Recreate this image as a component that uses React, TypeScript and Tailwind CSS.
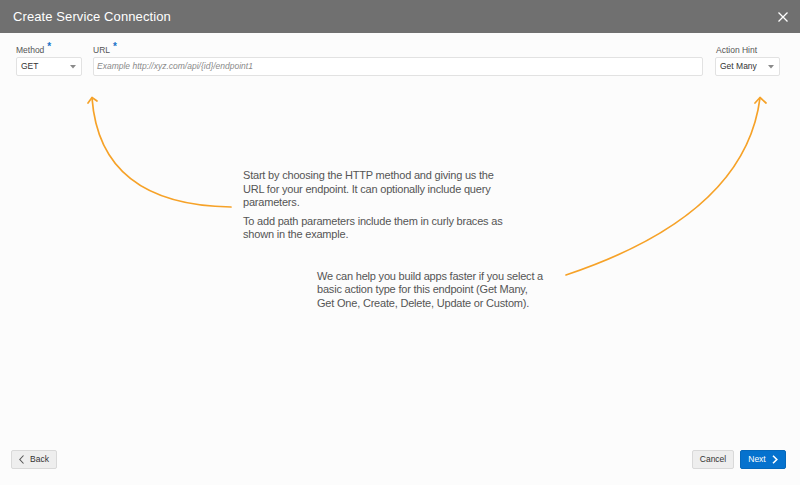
import React from 'react';

// Small dropdown caret used inside the select boxes
const Caret = () => (
  <svg width="6" height="4" viewBox="0 0 6 4" className="shrink-0">
    <path d="M0 0 L6 0 L3 3.5 Z" fill="#8a8a8a" />
  </svg>
);

const Required = () => <span className="ml-[3px] text-[#1a73c8] text-[10px] font-bold relative -top-[3px]">*</span>;

const FieldLabel = ({ text, required }: { text: string; required?: boolean }) => (
  <div className="h-[12px] text-[8.5px] leading-[12px] text-[#555] mb-[1px] whitespace-nowrap">
    {text}
    {required && <Required />}
  </div>
);

const SelectBox = ({ value, width }: { value: string; width: string }) => (
  <div
    className={`${width} h-[19px] flex items-center justify-between pl-[4px] pr-[5px] bg-white border border-[#e2e2e2] rounded-[2px] text-[8.5px] text-[#333]`}
  >
    <span>{value}</span>
    <Caret />
  </div>
);

// Orange hint arrows drawn over the page
const HintArrows = () => (
  <svg className="absolute inset-0 pointer-events-none" width="800" height="485" viewBox="0 0 800 485">
    <g fill="none" stroke="#f6a228" strokeWidth="1.7" strokeLinecap="round" strokeLinejoin="round">
      <path d="M231 207 Q100 205 92 98" />
      <path d="M88 103 L92 97.5 L97 101" />
      <path d="M566 275 Q745 215 760 98" />
      <path d="M755 103 L760 97.5 L766 103" />
    </g>
  </svg>
);

export default function App() {
  return (
    <div
      className="relative w-[800px] h-[485px] flex flex-col bg-[#fcfcfc] overflow-hidden"
      style={{ fontFamily: '"Liberation Sans", Arial, sans-serif' }}
    >
      <header className="h-[33px] shrink-0 bg-[#707070] flex items-center justify-between pl-[13px] pr-[12px]">
        <h1 className="text-[13px] text-white font-normal tracking-[0.1px]">Create Service Connection</h1>
        <svg width="10" height="10" viewBox="0 0 10 10" className="mt-[1px]">
          <path d="M0.5 0.5 L9.5 9.5 M9.5 0.5 L0.5 9.5" stroke="#fff" strokeWidth="1.3" />
        </svg>
      </header>

      <main className="flex-1 flex flex-col">
        <div className="flex items-start pt-[11px] pl-[16px] pr-[20px]">
          <div className="w-[66px]">
            <FieldLabel text="Method" required />
            <SelectBox value="GET" width="w-[66px]" />
          </div>
          <div className="flex-1 ml-[11px]">
            <FieldLabel text="URL" required />
            <div className="h-[19px] flex items-center pl-[3px] bg-white border border-[#e2e2e2] rounded-[2px] text-[8.5px] italic text-[#8a8a8a]">
              Example http://xyz.com/api/{'{id}'}/endpoint1
            </div>
          </div>
          <div className="w-[65px] ml-[12px]">
            <div className="pl-[1px]">
              <FieldLabel text="Action Hint" />
            </div>
            <SelectBox value="Get Many" width="w-[65px]" />
          </div>
        </div>

        <div className="ml-[243px] mt-[93px] text-[11px] tracking-[-0.2px] leading-[13.5px] text-[#555] whitespace-nowrap">
          <p>
            Start by choosing the HTTP method and giving us the
            <br />
            URL for your endpoint. It can optionally include query
            <br />
            parameters.
          </p>
          <p className="mt-[5px]">
            To add path parameters include them in curly braces as
            <br />
            shown in the example.
          </p>
        </div>

        <p className="ml-[317px] mt-[28px] text-[11px] tracking-[-0.2px] leading-[13.5px] text-[#555] whitespace-nowrap">
          We can help you build apps faster if you select a
          <br />
          basic action type for this endpoint (Get Many,
          <br />
          Get One, Create, Delete, Update or Custom).
        </p>

        <footer className="mt-auto flex items-center justify-between pl-[11px] pr-[14px] pb-[16px]">
          <button className="h-[19px] w-[46px] flex items-center justify-center gap-[6px] bg-[#eeeeee] border border-[#d9d9d9] rounded-[2px] text-[8.5px] text-[#333]">
            <svg width="5" height="9" viewBox="0 0 5 9">
              <path d="M4.5 0.5 L0.8 4.5 L4.5 8.5" fill="none" stroke="#555" strokeWidth="1.1" />
            </svg>
            Back
          </button>
          <div className="flex gap-[6px]">
            <button className="h-[19px] w-[42px] bg-[#eeeeee] border border-[#d9d9d9] rounded-[2px] text-[8.5px] text-[#333]">
              Cancel
            </button>
            <button className="h-[19px] w-[46px] flex items-center justify-center gap-[6px] bg-[#0572ce] border border-[#0568bb] rounded-[2px] text-[8.5px] text-white">
              Next
              <svg width="6" height="9" viewBox="0 0 6 9">
                <path d="M1 0.8 L4.8 4.5 L1 8.2" fill="none" stroke="#fff" strokeWidth="1.6" />
              </svg>
            </button>
          </div>
        </footer>
      </main>

      <HintArrows />
    </div>
  );
}
